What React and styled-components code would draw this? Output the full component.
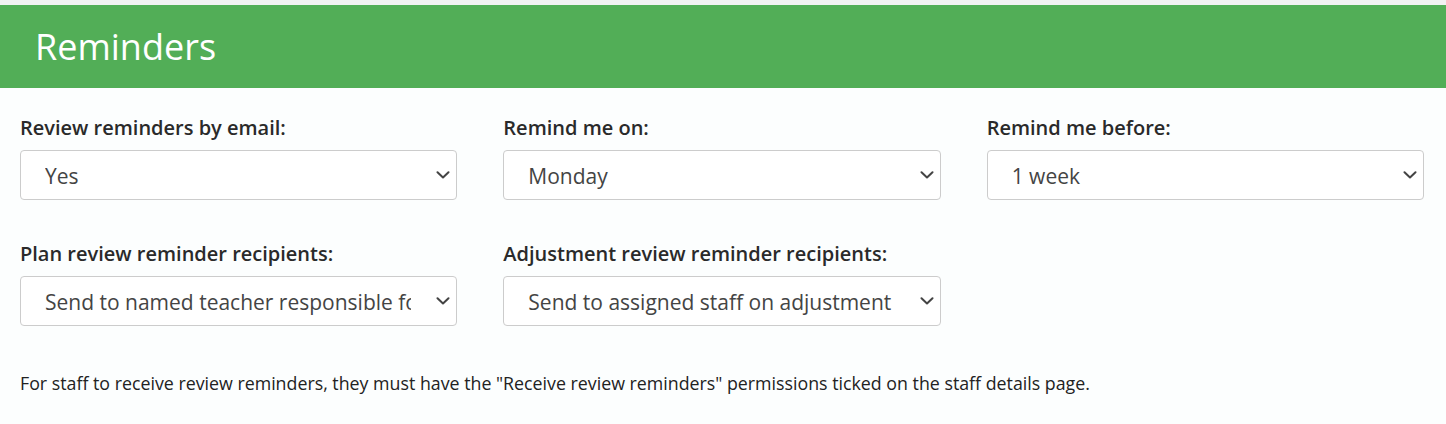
import styled, { createGlobalStyle } from "styled-components";

const GlobalStyle = createGlobalStyle`
  html, body {
    margin: 0;
    padding: 0;
    background: #fcfefe;
    font-family: "Open Sans", "Noto Sans", sans-serif;
  }
`;

const fields = [
  { label: "Review reminders by email:", value: "Yes", options: ["Yes", "No"] },
  { label: "Remind me on:", value: "Monday", options: ["Monday", "Tuesday", "Wednesday", "Thursday", "Friday"] },
  { label: "Remind me before:", value: "1 week", options: ["1 week", "2 weeks", "1 month"] },
  {
    label: "Plan review reminder recipients:",
    value: "Send to named teacher responsible for plan",
    options: ["Send to named teacher responsible for plan", "Send to all staff"],
  },
  {
    label: "Adjustment review reminder recipients:",
    value: "Send to assigned staff on adjustment",
    options: ["Send to assigned staff on adjustment", "Send to all staff"],
  },
];

const Chevron = () => (
  <ChevronIcon width="14" height="8" viewBox="0 0 14 8">
    <path d="M1.5 1.2 L7 6.5 L12.5 1.2" fill="none" stroke="#444" strokeWidth="2" strokeLinecap="round" strokeLinejoin="round" />
  </ChevronIcon>
);

const App = () => {
  return (
    <>
      <GlobalStyle />
      <Page>
        <Header>
          <Title>Reminders</Title>
        </Header>
        <Body>
          <Grid>
            {fields.map((f) => (
              <Field key={f.label}>
                <Label>{f.label}</Label>
                <SelectWrap>
                  <Select defaultValue={f.value}>
                    {f.options.map((o) => (
                      <option key={o}>{o}</option>
                    ))}
                  </Select>
                  <Chevron />
                </SelectWrap>
              </Field>
            ))}
          </Grid>
          <Note>
            For staff to receive review reminders, they must have the "Receive review reminders" permissions ticked on
            the staff details page.
          </Note>
        </Body>
      </Page>
    </>
  );
};
export default App;

const Page = styled.div`
  border-top: 5px solid #f1f2f2;
`;

const Header = styled.div`
  background: #52ae57;
  height: 83px;
  display: flex;
  align-items: center;
  padding-left: 35px;
`;

const Title = styled.h1`
  margin: 0;
  color: #fff;
  font-size: 36px;
  font-weight: 400;
  line-height: 1;
`;

const Body = styled.div`
  padding: 26px 22px 0 20px;
`;

const Grid = styled.div`
  display: grid;
  grid-template-columns: repeat(3, 1fr);
  column-gap: 46px;
  row-gap: 40px;
`;

const Field = styled.div`
  display: flex;
  flex-direction: column;
`;

const Label = styled.label`
  font-size: 20px;
  font-weight: 600;
  color: #2a2a2a;
  line-height: 28px;
  margin-bottom: 8px;
`;

const SelectWrap = styled.div`
  position: relative;
`;

const Select = styled.select`
  appearance: none;
  width: 100%;
  height: 50px;
  box-sizing: border-box;
  border: 1px solid #cccccc;
  border-radius: 4px;
  background: #fff;
  padding: 2px 45px 0 24px;
  font-family: "Open Sans", "Noto Sans", sans-serif;
  font-size: 21px;
  color: #444;
  outline: none;
`;

const ChevronIcon = styled.svg`
  position: absolute;
  right: 7px;
  top: 21px;
  pointer-events: none;
`;

const Note = styled.p`
  margin: 44px 0 0;
  font-size: 17.8px;
  color: #222;
  line-height: 26px;
`;
